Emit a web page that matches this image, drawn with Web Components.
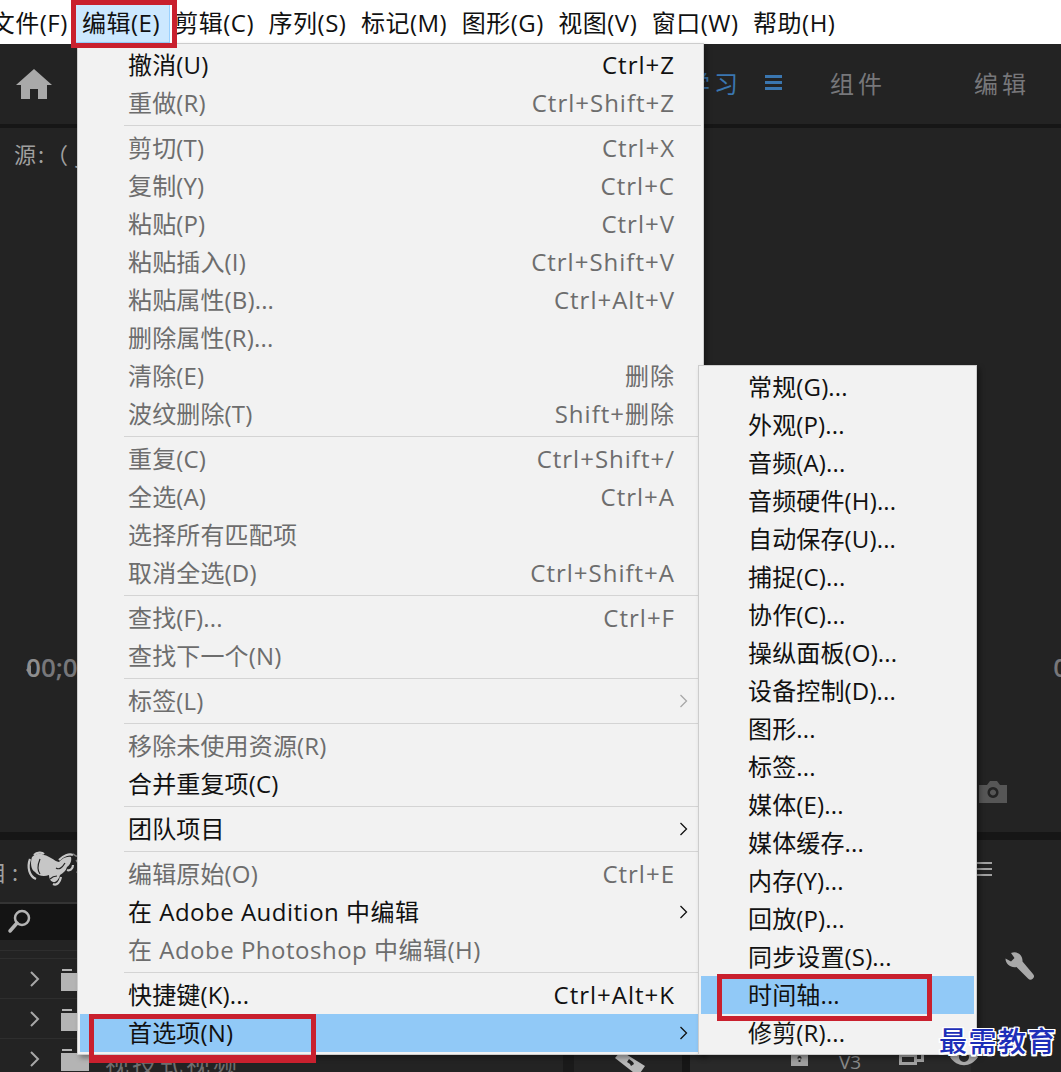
<!DOCTYPE html>
<html lang="zh">
<head>
<meta charset="utf-8">
<title>Premiere</title>
<style>
    html, body { margin: 0; padding: 0; height: 100%; overflow: hidden; background: #232323; }
    body { font-family: "Open Sans", "Noto Sans CJK SC", sans-serif; }
</style>
</head>
<body>
<app-shell></app-shell>

<script>
const UI_FONT = '"Open Sans", "Noto Sans CJK SC", sans-serif';

class MenuBar extends HTMLElement {
    constructor() {
        super();
        this.attachShadow({ mode: 'open' });
        const labels = ['文件(F)', '编辑(E)', '剪辑(C)', '序列(S)', '标记(M)', '图形(G)', '视图(V)', '窗口(W)', '帮助(H)'];
        this.shadowRoot.innerHTML = `
            <style>
                :host { display: flex; height: 44px; background: #fff; color: #111; font: 24px/46px ${UI_FONT}; letter-spacing: .5px; overflow: hidden; }
                span { flex: none; padding: 0 7.25px; height: 43px; }
                .first { margin-left: -16.500px; }
                .on { background: #cce8ff; box-shadow: inset 0 0 0 1px #99d1ff; margin-right: -3px; padding: 0 10px 0 7px; }
            </style>
            ${labels.map((t, i) => `<span class="${i === 0 ? 'first' : i === 1 ? 'on' : ''}">${t}</span>`).join('')}
        `;
    }
}
customElements.define('menu-bar', MenuBar);

class WorkspaceBar extends HTMLElement {
    constructor() {
        super();
        this.attachShadow({ mode: 'open' });
        this.shadowRoot.innerHTML = `
            <style>
                :host { display: flex; align-items: center; height: 80px; background: #232323; border-bottom: 4px solid #161616; font: 24px "Noto Sans CJK SC", sans-serif; letter-spacing: 4px; color: #77777a; }
                svg { flex: none; margin-left: 16px; }
                .tabs { display: flex; align-items: center; margin-left: auto; padding-bottom: 4px; }
                .learn { color: #3a76b0; }
                .lines { width: 17px; height: 15px; margin: 0 48px 0 23px; background: linear-gradient(#3a76b0 3px, transparent 3px 6px, #3a76b0 6px 9px, transparent 9px 12px, #3a76b0 12px); }
                .gap { margin-right: 88px; }
                .last { margin-right: 31px; }
            </style>
            <svg width="36" height="32" viewBox="0 0 36 32"><path fill="#a9a9a9" d="M18 1 36 17h-5v14h-9V21h-8v10H5V17H0z"/></svg>
            <div class="tabs">
                <span class="learn">学习</span><i class="lines"></i>
                <span class="gap">组件</span><span class="last">编辑</span>
            </div>
        `;
    }
}
customElements.define('workspace-bar', WorkspaceBar);

class SourcePanel extends HTMLElement {
    constructor() {
        super();
        this.attachShadow({ mode: 'open' });
        this.shadowRoot.innerHTML = `
            <style>
                :host { display: flex; flex-direction: column; height: 704px; background: #232323; border-bottom: 8px solid #161616; color: #a0a0a0; font: 22px "Noto Sans CJK SC", sans-serif; overflow: hidden; }
                .title { padding: 9px 0 0 14px; height: 40px; letter-spacing: 2px; }
                .time { display: flex; justify-content: space-between; align-items: center; margin-top: 472px; padding-left: 26px; color: #77777a; font: 600 26px/36px "Open Sans", sans-serif; margin-right: -7px; }
                .time b { font-weight: 600; color: #8e8e8e; }
                .time i { display: inline-block; vertical-align: middle; width: 0; height: 0; margin: 0 -5px 0 0; border: 5px solid transparent; border-left: 0; border-right-color: #8e8e8e; }
                .cam { display: flex; justify-content: flex-end; padding-right: 54px; margin-top: 96px; }
            </style>
            <div class="title">源:（ｊ</div>
            <div class="time"><span><i></i><b>0</b>0;0</span><span>0</span></div>
            <div class="cam">
                <svg width="28" height="22" viewBox="0 0 28 22"><path fill="#565656" fill-rule="evenodd" d="M0 4h8l3-4h7l3 4h7v18H0zM14 6a5.500 5.500 0 1 0 .01 0zM14 8.500a3 3 0 1 1-.01 0z"/></svg>
            </div>
        `;
    }
}
customElements.define('source-panel', SourcePanel);

class ProjectPanel extends HTMLElement {
    constructor() {
        super();
        this.attachShadow({ mode: 'open' });
        const row = (label = '') => `
            <div class="row">
                <svg class="chev" width="12" height="18" viewBox="0 0 12 18"><path d="M3 2l7 7-7 7" fill="none" stroke="#a8a8a8" stroke-width="2"/></svg>
                <svg class="folder" width="28" height="22" viewBox="0 0 28 22"><path fill="#b4b4b4" d="M1 0h10v2H1zM0 4h28v18H0z"/></svg>
                ${label ? `<span class="name">${label}</span>` : ''}
            </div>`;
        this.shadowRoot.innerHTML = `
            <style>
                :host { display: flex; height: 232px; background: #232323; color: #a0a0a0; font: 22px "Noto Sans CJK SC", sans-serif; overflow: hidden; }
                .left { width: 90px; flex: none; }
                .head { display: flex; align-items: center; height: 62px; margin-left: -15px; border-bottom: 2px solid #343434; letter-spacing: 5px; white-space: nowrap; }
                .blot { width: 54px; height: 38px; flex: none; margin: 0 0 2px 3px; }
                .search { display: flex; align-items: center; height: 36px; background: #141414; padding-left: 7px; }
                .band { height: 18px; box-sizing: border-box; padding-top: 10px; }
                .band div { height: 1px; background: #2e2e2e; }
                .row { display: flex; align-items: center; height: 40px; padding-left: 28px; border-top: 1px solid #2e2e2e; box-sizing: border-box; white-space: nowrap; }
                .chev { flex: none; }
                .folder { margin: 2px 0 0 21px; flex: none; }
                .name { margin: 8px 0 0 16px; color: #6e6e6e; font-size: 24px; letter-spacing: 3px; flex: none; }
                .mid { flex: 1; min-width: 0; display: flex; flex-direction: column; justify-content: flex-end; }
                .strip { display: flex; align-items: flex-start; height: 24px; color: #8a8a8a; background: linear-gradient(90deg, transparent 600px, #292929 600px 900px, transparent 900px); }
                .strip svg, .strip i, .strip span { flex: none; }
                .d1 { width: 11px; height: 24px; margin-left: 473px; background: #1a1a1a; }
                .razor { margin-left: 38px; }
                .d2 { width: 8px; height: 24px; margin-left: 34px; background: #161616; }
                .lock { margin: 5px 0 0 101px; }
                .v3 { margin-left: 31px; width: 24px; font: 19px/24px "Open Sans", sans-serif; padding-top: 2px; }
                .cards { margin: 4px 0 0 36px; }
                .eye { margin: 0 0 0 25px; }
                .right { width: 90px; flex: none; box-sizing: border-box; }
                .ham { display: block; width: 15px; height: 14px; margin: 22px 0 0 6px; background: linear-gradient(#a0a0a0 2px, transparent 2px 6px, #a0a0a0 6px 8px, transparent 8px 12px, #a0a0a0 12px); }
                .wrench { display: block; margin: 76px 0 0 34px; }
            </style>
            <div class="left">
                <div class="head">
                    <span>目:</span>
                    <svg class="blot" viewBox="0 0 54 38"><path fill="#c6c6c6" d="M6 6c4-4 9-4 12-2 6 1 10 6 15 7 3-3 7-6 12-5 1 4-1 8-4 10-1 4-4 6-7 8-1 4-4 8-7 7s-4-4-4-7c-5 2-11 1-14-3C5 19 4 12 6 6z"/><path fill="none" stroke="#232323" stroke-width="1.200" d="M14 8c-2 5-3 11 0 15M30 17c3 2 6 0 9-5M24 28c2-2 4-3 7-3"/><path fill="none" stroke="#c6c6c6" stroke-width="2.200" d="M4 8c-3 8-1 17 6 20M33 9c4-4 10-7 14-5M41 19c3 1 6-1 6-5M27 33c4 2 7-2 8-7M8 4c3-3 8-3 10-1"/><path fill="none" stroke="#7e7e7e" stroke-width="1.500" d="M47 3c2 1 3 3 5 2M50 9c3 3 3 8 1 13"/></svg>
                </div>
                <div class="search">
                    <svg width="26" height="28" viewBox="0 0 26 28"><circle cx="15" cy="10" r="7" fill="none" stroke="#b4b4b4" stroke-width="2.500"/><path d="M10 15 3 23" stroke="#b4b4b4" stroke-width="3.500" stroke-linecap="round"/></svg>
                </div>
                <div class="band"><div></div></div>
                ${row()}${row()}${row('视技式视频')}
            </div>
            <div class="mid">
                <div class="strip">
                    <i class="d1"></i>
                    <svg class="razor" width="36" height="24" viewBox="0 0 36 24"><path fill="#b8b8b8" fill-rule="evenodd" d="M3 10 9 3l24 15-7 10zM17 11l-2 3 3 2 1 2 3-2-1-2z"/></svg>
                    <i class="d2"></i>
                    <svg class="lock" width="17" height="13" viewBox="0 0 17 13"><path fill="#a0a0a0" fill-rule="evenodd" d="M0 0h17v13H0zM8.500 3a2 2 0 1 0 .01 0zM7.500 5h2v4h-2z"/></svg>
                    <span class="v3">V3</span>
                    <svg class="cards" width="25" height="13" viewBox="0 0 25 13"><path fill="none" stroke="#a0a0a0" stroke-width="3" d="M1.500 3.500h15v8h-15zM16 1.500h7.500v7H17"/></svg>
                    <svg class="eye" width="30" height="22" viewBox="0 0 30 22"><path fill="#a8a8a8" fill-rule="evenodd" d="M1 9C8-2 22-2 29 9 22 20 8 20 1 9zM15 4a5 5 0 1 0 .01 0z"/></svg>
                </div>
            </div>
            <div class="right">
                <i class="ham"></i>
                <svg class="wrench" width="29" height="30" viewBox="0 0 29 30"><path fill="#a8a8a8" d="M6 1c6-2.500 12 2 11.500 8.500L28 22a3.300 3.300 0 0 1-5 4.500L11.500 15C6 16 .5 12.500.5 6.500L6 9.500 9.500 6z"/></svg>
            </div>
        `;
    }
}
customElements.define('project-panel', ProjectPanel);

class MenuList extends HTMLElement {
    constructor() {
        super();
        this.attachShadow({ mode: 'open' });
        this.shadowRoot.innerHTML = `
            <style>
                :host { display: block; box-sizing: border-box; background: #f2f2f2; border: 1px solid #cdcdcd; padding: 2px 2px 2px; color: #111; font: 24px ${UI_FONT}; letter-spacing: .15px; box-shadow: 3px 3px 5px rgba(0,0,0,.35); }
            </style>
            <slot></slot>
        `;
    }
}
customElements.define('menu-list', MenuList);

class MenuItem extends HTMLElement {
    constructor() {
        super();
        this.attachShadow({ mode: 'open' });
        const key = this.getAttribute('key') || '';
        const arrow = this.hasAttribute('arrow') ? '<svg class="arrow" width="10" height="16" viewBox="0 0 10 16"><path d="M1.500 2l6 6-6 6" fill="none" stroke="currentColor" stroke-width="1.300"/></svg>' : '';
        this.shadowRoot.innerHTML = `
            <style>
                :host { display: flex; align-items: center; height: 38px; padding-left: var(--indent, 48px); padding-right: 26px; position: relative; line-height: 38px; white-space: nowrap; }
                :host([disabled]) { color: #6d6d6d; }
                :host([active]) { background: #91c9f7; }
                :host([spaced]) { letter-spacing: .5px; }
                .key { margin-left: auto; letter-spacing: 1px; }
                .arrow { position: absolute; right: 12px; top: 11px; }
                :host([disabled]) .arrow { color: #a8a8a8; }
            </style>
            <slot></slot><span class="key">${key}</span>${arrow}
        `;
    }
}
customElements.define('menu-item', MenuItem);

class MenuSep extends HTMLElement {
    constructor() {
        super();
        this.attachShadow({ mode: 'open' });
        this.shadowRoot.innerHTML = `
            <style>
                :host { display: block; height: 7px; box-sizing: border-box; padding-top: 3px; margin-left: 44px; }
                div { height: 1px; background: #d4d4d4; }
            </style>
            <div></div>
        `;
    }
}
customElements.define('menu-sep', MenuSep);

class RedBox extends HTMLElement {
    constructor() {
        super();
        this.attachShadow({ mode: 'open' });
        this.shadowRoot.innerHTML = `
            <style>
                :host { display: block; position: absolute; box-sizing: border-box; border: 5px solid #c9202e; pointer-events: none; }
            </style>
        `;
    }
}
customElements.define('red-box', RedBox);

class WaterMark extends HTMLElement {
    constructor() {
        super();
        this.attachShadow({ mode: 'open' });
        this.shadowRoot.innerHTML = `
            <style>
                :host { display: block; position: absolute; left: 939px; top: 1021px; color: #1d2fb8; font: 500 28px/38px "Noto Sans CJK SC", sans-serif; letter-spacing: 1.500px; white-space: nowrap;
                    text-shadow: 1.500px 0 #fff, -1.500px 0 #fff, 0 1.500px #fff, 0 -1.500px #fff, 1.500px 1.500px #fff, -1.500px -1.500px #fff, 1.500px -1.500px #fff, -1.500px 1.500px #fff; }
            </style>
            最需教育
        `;
    }
}
customElements.define('water-mark', WaterMark);

class AppShell extends HTMLElement {
    constructor() {
        super();
        this.attachShadow({ mode: 'open' });
        const main = [
            ['撤消(U)', 'Ctrl+Z'], ['-重做(R)', 'Ctrl+Shift+Z'], 0,
            ['-剪切(T)', 'Ctrl+X'], ['-复制(Y)', 'Ctrl+C'], ['-粘贴(P)', 'Ctrl+V'], ['-粘贴插入(I)', 'Ctrl+Shift+V'], ['-粘贴属性(B)...', 'Ctrl+Alt+V'], ['-删除属性(R)...'], ['-清除(E)', '删除'], ['-波纹删除(T)', 'Shift+删除'], 0,
            ['-重复(C)', 'Ctrl+Shift+/'], ['-全选(A)', 'Ctrl+A'], ['-选择所有匹配项'], ['-取消全选(D)', 'Ctrl+Shift+A'], 0,
            ['-查找(F)...', 'Ctrl+F'], ['-查找下一个(N)'], 0,
            ['-标签(L)', '', '>'], 0,
            ['-移除未使用资源(R)'], ['合并重复项(C)'], 0,
            ['团队项目', '', '>'], 0,
            ['-编辑原始(O)', 'Ctrl+E'], ['在 Adobe Audition 中编辑', '', '>'], ['-在 Adobe Photoshop 中编辑(H)'], 0,
            ['快捷键(K)...', 'Ctrl+Alt+K'], ['*首选项(N)', '', '>']
        ];
        const sub = ['常规(G)...', '外观(P)...', '音频(A)...', '音频硬件(H)...', '自动保存(U)...', '捕捉(C)...', '协作(C)...', '操纵面板(O)...', '设备控制(D)...', '图形...', '标签...', '媒体(E)...', '媒体缓存...', '内存(Y)...', '回放(P)...', '同步设置(S)...', '*时间轴...', '修剪(R)...'];
        const item = ([label, key, arrow]) => {
            const flag = label[0] === '-' ? ' disabled' : label[0] === '*' ? ' active' : '';
            const text = flag ? label.slice(1) : label;
            const spaced = text.includes('Adobe') ? ' spaced' : '';
            return `<menu-item${flag}${spaced}${key ? ` key="${key}"` : ''}${arrow ? ' arrow' : ''}>${text}</menu-item>`;
        };
        this.shadowRoot.innerHTML = `
            <style>
                :host { display: block; position: relative; width: 1061px; height: 1072px; overflow: hidden; background: #232323; }
                .main { position: absolute; left: 77px; top: 43px; width: 627px; height: 1012px; }
                .sub { position: absolute; left: 698px; top: 365px; width: 279px; height: 690px; --indent: 47px; }
            </style>
            <menu-bar></menu-bar>
            <workspace-bar></workspace-bar>
            <source-panel></source-panel>
            <project-panel></project-panel>

            <menu-list class="main">${main.map(m => m ? item(m) : '<menu-sep></menu-sep>').join('')}</menu-list>
            <menu-list class="sub">${sub.map(s => item([s])).join('')}</menu-list>

            <red-box style="left:71px;top:0;width:106px;height:48px"></red-box>
            <red-box style="left:89px;top:1014px;width:227px;height:49px;border-bottom-width:8px"></red-box>
            <red-box style="left:717px;top:974px;width:215px;height:47px"></red-box>
            <water-mark></water-mark>
        `;
    }
}
customElements.define('app-shell', AppShell);
</script>
</body>
</html>
